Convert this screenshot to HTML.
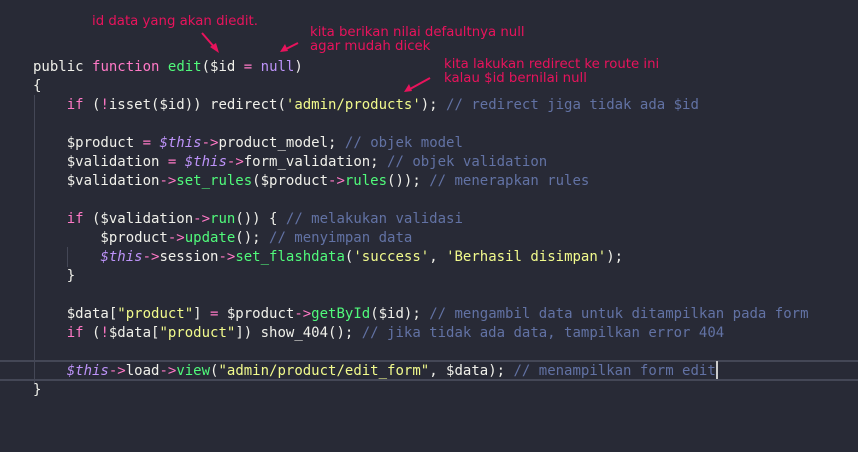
<!DOCTYPE html>
<html><head><meta charset="utf-8"><style>
body{margin:0;width:858px;height:452px;background:#282a36;position:relative;overflow:hidden}
pre{position:absolute;left:33px;top:57.5px;margin:0;font-family:"DejaVu Sans Mono","Liberation Mono",monospace;font-size:14px;line-height:19px;color:#f0f0ea;white-space:pre}
.k{color:#ff79c6}.f{color:#50fa7b}.n{color:#bd93f9}.s{color:#f1fa8c}.c{color:#6272a4}.t{color:#bd93f9;font-style:italic}
.hl{position:absolute;left:0;top:360px;width:858px;height:17px;border-top:2px solid #444756;border-bottom:2px solid #444756}
.g{position:absolute;width:1px;background:#444756}
.a{position:absolute;font-family:"DejaVu Sans","Liberation Sans",sans-serif;font-size:13.3px;line-height:14px;color:#e8135c}
.cur{position:absolute;left:716px;top:361px;width:2px;height:18px;background:#ccc}
</style></head><body>
<div class="hl"></div>
<div class="g" style="left:34px;top:95px;height:290px"></div>
<div class="g" style="left:67px;top:247px;height:20px"></div>
<div class="a" style="left:92px;top:15px">id data yang akan diedit.</div>
<div class="a" style="left:310px;top:26px">kita berikan nilai defaultnya null<br>agar mudah dicek</div>
<div class="a" style="left:444px;top:58px">kita lakukan redirect ke route ini<br>kalau $id bernilai null</div>
<svg style="position:absolute;left:0;top:0" width="858" height="452"><g stroke="#e8135c" stroke-width="2" fill="#e8135c">
<line x1="202" y1="33" x2="215" y2="48"/><polygon points="219,53 210,47 216,43" stroke="none"/>
<line x1="298" y1="43" x2="286" y2="49"/><polygon points="280,52 285,44 288,51" stroke="none"/>
<line x1="430" y1="78" x2="410" y2="89"/><polygon points="404,92 409,84 412,91" stroke="none"/>
</g></svg>
<pre>public <span class="k">function</span> <span class="f">edit</span>($id <span class="k">=</span> <span class="n">null</span>)
{
    <span class="k">if</span> (<span class="k">!</span>isset($id)) redirect(<span class="s">'admin/products'</span>); <span class="c">// redirect jiga tidak ada $id</span>

    $product <span class="k">=</span> <span class="t">$this</span><span class="k">-&gt;</span>product_model; <span class="c">// objek model</span>
    $validation <span class="k">=</span> <span class="t">$this</span><span class="k">-&gt;</span>form_validation; <span class="c">// objek validation</span>
    $validation<span class="k">-&gt;</span><span class="f">set_rules</span>($product<span class="k">-&gt;</span><span class="f">rules</span>()); <span class="c">// menerapkan rules</span>

    <span class="k">if</span> ($validation<span class="k">-&gt;</span><span class="f">run</span>()) { <span class="c">// melakukan validasi</span>
        $product<span class="k">-&gt;</span><span class="f">update</span>(); <span class="c">// menyimpan data</span>
        <span class="t">$this</span><span class="k">-&gt;</span>session<span class="k">-&gt;</span><span class="f">set_flashdata</span>(<span class="s">'success'</span>, <span class="s">'Berhasil disimpan'</span>);
    }

    $data[<span class="s">"product"</span>] <span class="k">=</span> $product<span class="k">-&gt;</span><span class="f">getById</span>($id); <span class="c">// mengambil data untuk ditampilkan pada form</span>
    <span class="k">if</span> (<span class="k">!</span>$data[<span class="s">"product"</span>]) show_404(); <span class="c">// jika tidak ada data, tampilkan error 404</span>

    <span class="t">$this</span><span class="k">-&gt;</span>load<span class="k">-&gt;</span><span class="f">view</span>(<span class="s">"admin/product/edit_form"</span>, $data); <span class="c">// menampilkan form edit</span>
}</pre>
<div class="cur"></div>
</body></html>
